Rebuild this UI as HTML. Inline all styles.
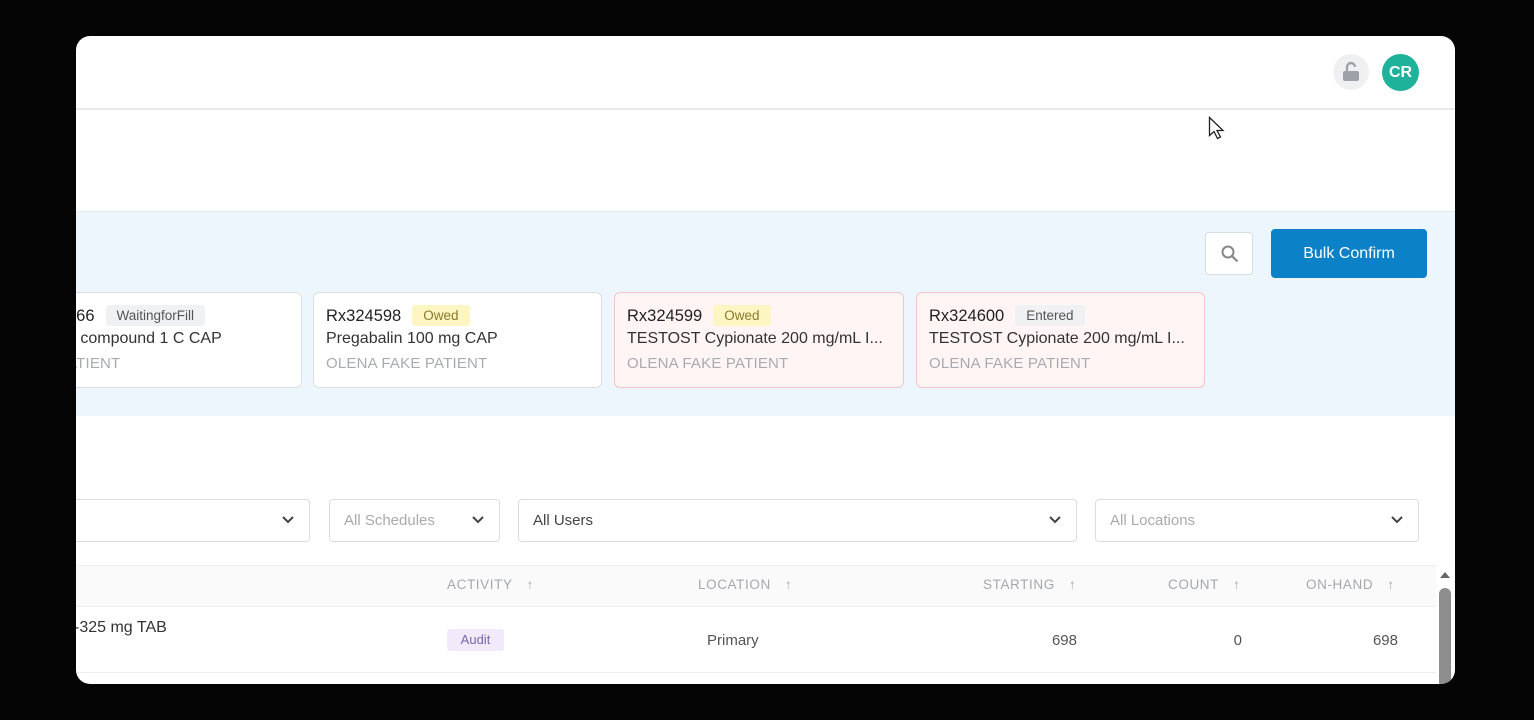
<!DOCTYPE html>
<html><head><meta charset="utf-8"><style>
*{margin:0;padding:0;box-sizing:border-box}
body{width:1534px;height:720px;background:#050505;font-family:"Liberation Sans",sans-serif;overflow:hidden;position:relative}
.card{position:absolute;left:76px;top:36px;width:1379px;height:648px;background:#fff;border-radius:14px;overflow:hidden}
.a{position:absolute;white-space:nowrap}
.rx{position:absolute;top:256px;height:96px;background:#fff;border:1.5px solid #dcdfe3;border-radius:6px}
.rx.p{background:#fff5f5;border-color:#f2c6c6}
.t1{position:absolute;left:12px;top:12px;font-size:16.5px;color:#222}
.b{display:inline-block;font-size:13.5px;padding:3px 11px;border-radius:3px;margin-left:11px;color:#555;background:#eff1f3;vertical-align:1px}
.b.y{background:#fdf6c3;color:#8a7a2a}
.t2{position:absolute;left:12px;top:37px;font-size:16px;color:#333}
.t3{position:absolute;left:12px;top:62px;font-size:15px;color:#a8abb0;letter-spacing:.2px}
.dd{position:absolute;top:463px;height:43px;border:1px solid #dadde1;border-radius:4px;background:#fff;font-size:15px;color:#aaa;padding:12px 14px}
.dd svg{position:absolute;right:14px;top:15px}
.h{position:absolute;top:541px;font-size:13.5px;color:#a5a8ad;letter-spacing:.6px}
.h span{margin-left:14px}
.c{position:absolute;top:596px;font-size:15px;color:#555}
</style></head><body>
<div class="card">
<div class="a" style="left:0;top:72px;width:1379px;height:2px;background:#e8eaec"></div>
<div class="a" style="left:1257px;top:18px;width:36px;height:36px;border-radius:50%;background:#eef0f2"></div>
<svg class="a" style="left:1265px;top:25px" width="20" height="22" viewBox="0 0 20 22"><path d="M6 10V6a4 4 0 0 1 8 0" fill="none" stroke="#9ea2a8" stroke-width="2.4"/><rect x="2" y="10" width="16" height="10" rx="2" fill="#9ea2a8"/></svg>
<div class="a" style="left:1306px;top:18px;width:37px;height:37px;border-radius:50%;background:#1fb29a;color:#fff;font-weight:bold;font-size:16px;text-align:center;line-height:37px">CR</div>
<svg class="a" style="left:1132px;top:80px" width="18" height="24" viewBox="0 0 18 24"><path d="M1.5 1.5v18l4.5-4 3.5 7 3-1.5-3.5-6.5h6z" fill="#fff" stroke="#222" stroke-width="1.3"/></svg>
<div class="a" style="left:0;top:175px;width:1379px;height:205px;background:#eef6fd;border-top:1px solid #e2ebf3"></div>
<div class="a" style="left:1129px;top:196px;width:48px;height:43px;border:1px solid #d8dde2;border-radius:4px;background:#fff"></div>
<svg class="a" style="left:1144px;top:208px" width="20" height="20" viewBox="0 0 20 20"><circle cx="8" cy="8" r="5.5" fill="none" stroke="#888" stroke-width="2"/><path d="M12 12l5.5 5.5" stroke="#888" stroke-width="2.2"/></svg>
<div class="a" style="left:1195px;top:193px;width:156px;height:49px;background:#0b82c8;border-radius:4px;color:#fff;font-size:16px;text-align:center;line-height:49px">Bulk Confirm</div>
<div class="rx" style="left:-100px;width:326px"><div class="t1" style="left:90px">466<span class="b">WaitingforFill</span></div><div class="t2" style="left:90px">e compound 1 C CAP</div><div class="t3" style="left:90px">ATIENT</div></div>
<div class="rx" style="left:237px;width:289px"><div class="t1">Rx324598<span class="b y">Owed</span></div><div class="t2">Pregabalin 100 mg CAP</div><div class="t3">OLENA FAKE PATIENT</div></div>
<div class="rx p" style="left:538px;width:290px"><div class="t1">Rx324599<span class="b y">Owed</span></div><div class="t2">TESTOST Cypionate 200 mg/mL I...</div><div class="t3">OLENA FAKE PATIENT</div></div>
<div class="rx p" style="left:840px;width:289px"><div class="t1">Rx324600<span class="b">Entered</span></div><div class="t2">TESTOST Cypionate 200 mg/mL I...</div><div class="t3">OLENA FAKE PATIENT</div></div>
<div class="dd" style="left:-20px;width:254px"><svg width="14" height="10" viewBox="0 0 14 10"><path d="M2 2l5 5 5-5" fill="none" stroke="#444" stroke-width="2"/></svg></div>
<div class="dd" style="left:253px;width:171px">All Schedules<svg width="14" height="10" viewBox="0 0 14 10"><path d="M2 2l5 5 5-5" fill="none" stroke="#444" stroke-width="2"/></svg></div>
<div class="dd" style="left:442px;width:559px;color:#444">All Users<svg width="14" height="10" viewBox="0 0 14 10"><path d="M2 2l5 5 5-5" fill="none" stroke="#444" stroke-width="2"/></svg></div>
<div class="dd" style="left:1019px;width:324px">All Locations<svg width="14" height="10" viewBox="0 0 14 10"><path d="M2 2l5 5 5-5" fill="none" stroke="#444" stroke-width="2"/></svg></div>
<div class="a" style="left:0;top:529px;width:1360px;height:42px;background:#fafafa;border-top:1px solid #eceef0;border-bottom:1px solid #eceef0"></div>
<div class="h" style="left:371px">ACTIVITY<span>↑</span></div>
<div class="h" style="left:622px">LOCATION<span>↑</span></div>
<div class="h" style="left:907px">STARTING<span>↑</span></div>
<div class="h" style="left:1092px">COUNT<span>↑</span></div>
<div class="h" style="left:1230px">ON-HAND<span>↑</span></div>
<div class="a" style="left:0;top:636px;width:1360px;height:1px;background:#eceef0"></div>
<div class="c" style="left:-2px;top:583px;color:#333;font-size:16px">-325 mg TAB</div>
<div class="a" style="left:371px;top:593px;width:57px;height:22px;background:#f1eafb;border-radius:3px;color:#7a68b0;font-size:13px;text-align:center;line-height:22px">Audit</div>
<div class="c" style="left:631px">Primary</div>
<div class="c" style="left:970px;width:31px;text-align:right">698</div>
<div class="c" style="left:1150px;width:16px;text-align:right">0</div>
<div class="c" style="left:1290px;width:32px;text-align:right">698</div>
<svg class="a" style="left:1363px;top:535px" width="12" height="8" viewBox="0 0 12 8"><path d="M1 7L6 1l5 6z" fill="#666"/></svg>
<div class="a" style="left:1363px;top:552px;width:12px;height:100px;background:#8e8e8e;border-radius:6px"></div>
</div>
</body></html>
